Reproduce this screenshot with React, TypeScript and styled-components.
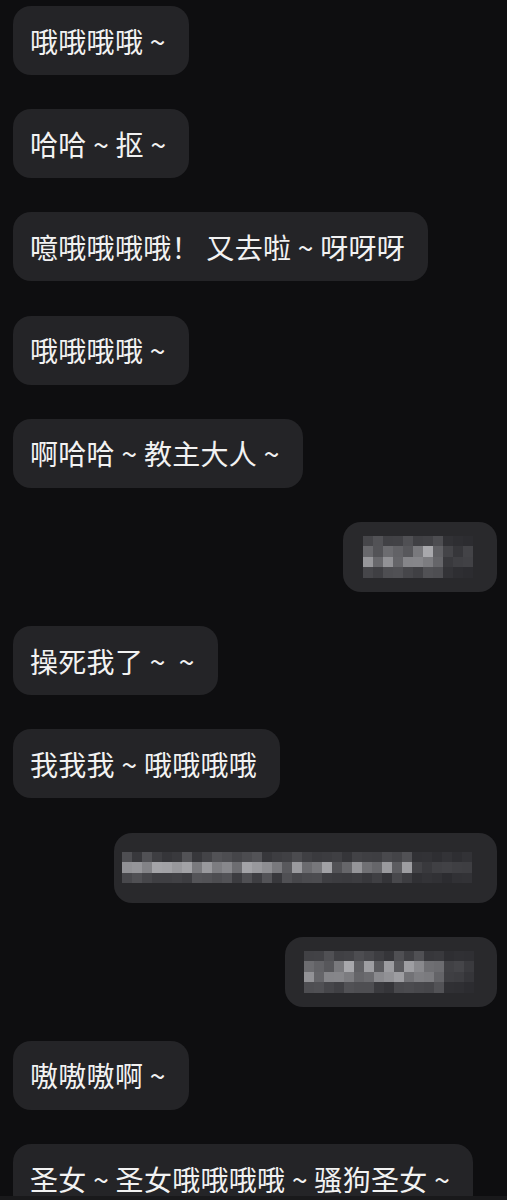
import React from "react";
import styled, { createGlobalStyle } from "styled-components";

const GlobalStyle = createGlobalStyle`
  html, body {
    margin: 0;
    padding: 0;
    background: #0e0e10;
  }
`;

const Screen = styled.div`
  position: relative;
  width: 507px;
  height: 1200px;
  overflow: hidden;
  box-sizing: border-box;
  padding: 6px 10px 0 13px;
  display: flex;
  flex-direction: column;
  gap: 34.2px;
  background: #0e0e10;
  font-family: "Noto Sans CJK SC", "Noto Sans", sans-serif;
`;

const Row = styled.div<{ $side: "left" | "right" }>`
  display: flex;
  flex-shrink: 0;
  justify-content: ${(p) => (p.$side === "left" ? "flex-start" : "flex-end")};
`;

const Bubble = styled.div`
  height: 69px;
  box-sizing: border-box;
  padding: 0 23px 0 17px;
  display: flex;
  align-items: center;
  border-radius: 18px;
  background: #242427;
  color: #f2f2f2;
  font-size: 28px;
  white-space: pre;
  letter-spacing: 0.3px;
`;

const BlurBubble = styled.div<{ $w: number; $pl: number }>`
  width: ${(p) => p.$w}px;
  height: 70px;
  box-sizing: border-box;
  padding-left: ${(p) => p.$pl}px;
  display: flex;
  align-items: center;
  border-radius: 18px;
  background: #29292c;
  filter: blur(0.4px);
`;

const Mosaic = styled.div<{ $cols: number; $rows: number }>`
  display: grid;
  grid-template-columns: repeat(${(p) => p.$cols}, 10px);
  grid-template-rows: repeat(${(p) => p.$rows}, 10.5px);
`;

const Cell = styled.div.attrs<{ $v: number }>((p) => ({
  style: { background: `rgb(${p.$v}, ${p.$v}, ${p.$v + 4})` },
}))<{ $v: number }>``;

const BottomBar = styled.div`
  position: absolute;
  left: 0;
  right: 0;
  bottom: 0;
  height: 4px;
  background: #19191b;
`;

// deterministic pseudo random shade
function rand(seed: number) {
  const x = Math.sin(seed * 12.9898) * 43758.5453;
  return x - Math.floor(x);
}

function buildShades(cols: number, rows: number, textCols: number, seed: number) {
  const out: number[] = [];
  for (let r = 0; r < rows; r++) {
    for (let c = 0; c < cols; c++) {
      const n = rand(seed + r * 97 + c * 13);
      const inText = c < textCols;
      const middle = r > 0 && r < rows - 1;
      let v: number;
      if (!inText) {
        v = middle ? 52 + n * 18 : 44 + n * 8;
      } else if (middle) {
        v = 80 + n * 90;
      } else {
        v = 52 + n * 32;
      }
      out.push(Math.round(v));
    }
  }
  return out;
}

type Msg =
  | { side: "left"; text: string }
  | {
      side: "right";
      width: number;
      pad: number;
      cols: number;
      rows: number;
      textCols: number;
      seed: number;
    };

const messages: Msg[] = [
  { side: "left", text: "哦哦哦哦 ~" },
  { side: "left", text: "哈哈 ~ 抠 ~" },
  { side: "left", text: "噫哦哦哦哦！ 又去啦 ~ 呀呀呀" },
  { side: "left", text: "哦哦哦哦 ~" },
  { side: "left", text: "啊哈哈 ~ 教主大人 ~" },
  { side: "right", width: 154, pad: 20, cols: 11, rows: 4, textCols: 8, seed: 3 },
  { side: "left", text: "操死我了 ~  ~" },
  { side: "left", text: "我我我 ~ 哦哦哦哦" },
  { side: "right", width: 383, pad: 8, cols: 35, rows: 3, textCols: 29, seed: 11 },
  { side: "right", width: 212, pad: 19, cols: 17, rows: 4, textCols: 14, seed: 29 },
  { side: "left", text: "嗷嗷嗷啊 ~" },
  { side: "left", text: "圣女 ~ 圣女哦哦哦哦 ~ 骚狗圣女 ~" },
];

export default function App() {
  return (
    <>
      <GlobalStyle />
      <Screen>
        {messages.map((m, i) =>
          m.side === "left" ? (
            <Row key={i} $side="left">
              <Bubble>{m.text}</Bubble>
            </Row>
          ) : (
            <Row key={i} $side="right">
              <BlurBubble $w={m.width} $pl={m.pad}>
                <Mosaic $cols={m.cols} $rows={m.rows}>
                  {buildShades(m.cols, m.rows, m.textCols, m.seed).map((v, j) => (
                    <Cell key={j} $v={v} />
                  ))}
                </Mosaic>
              </BlurBubble>
            </Row>
          )
        )}
        <BottomBar />
      </Screen>
    </>
  );
}
